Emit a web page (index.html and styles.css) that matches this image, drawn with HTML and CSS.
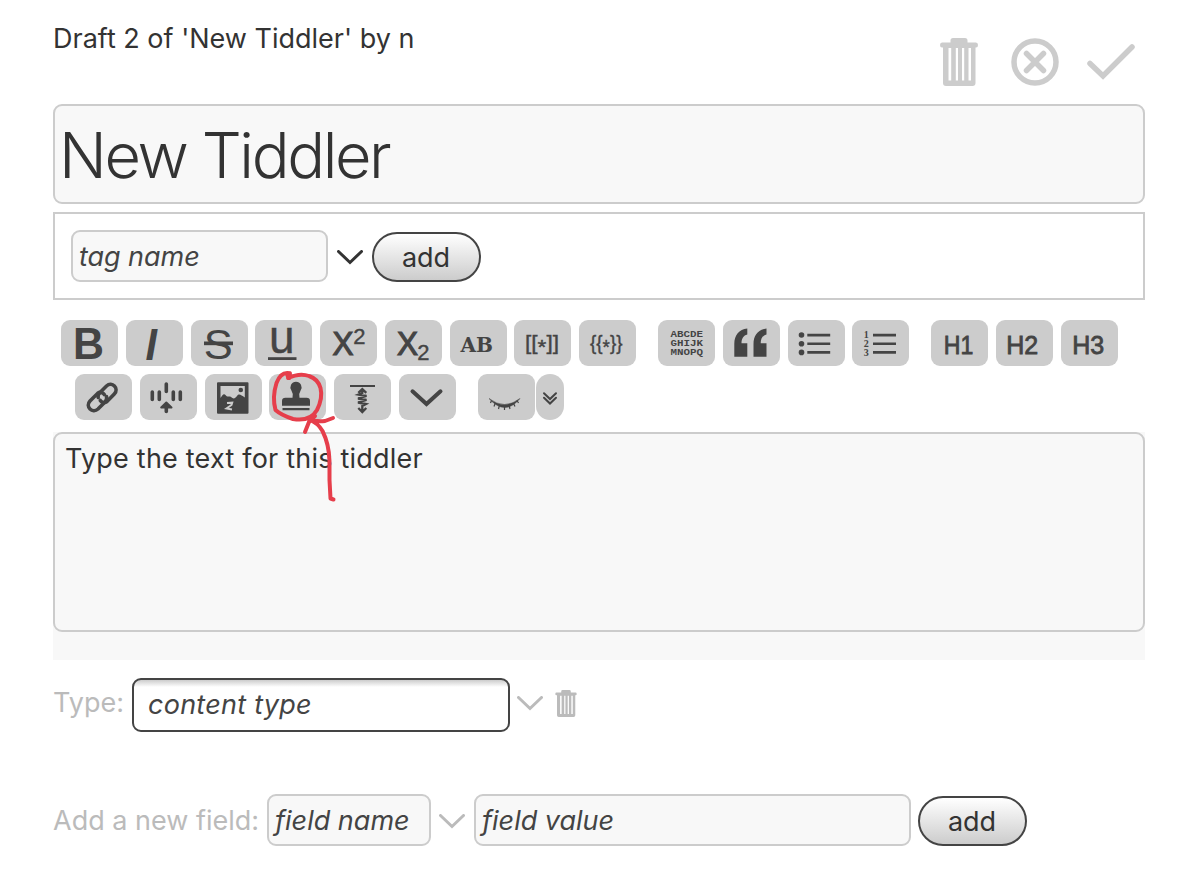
FILE: index.html
```html
<!DOCTYPE html>
<html lang="en">
<head>
<meta charset="utf-8">
<title>New Tiddler</title>
<link rel="stylesheet" href="styles.css">
</head>
<body>
<svg class="defs" width="0" height="0">
  <symbol id="trash" viewBox="0 0 38 48"><path fill-rule="evenodd" d="M2 4.500H10.500V2.500Q10.500 0 13 0H25Q27.500 0 27.500 2.500V4.500H36Q38 4.500 38 7T36 9.500H35.500V45Q35.500 48 32.500 48H6Q3 48 3 45V9.500H2Q0 9.500 0 7T2 4.500ZM8.500 10V42.500H11.200V10ZM15.800 10V42.500H18V10ZM22 10V42.500H24.200V10ZM28.500 10V42.500H31V10Z"/></symbol>
  <symbol id="down" viewBox="0 0 26 15"><path d="M1.500 1.500L13 12.500L24.500 1.500" fill="none" stroke="currentColor" stroke-width="3" stroke-linecap="round"/></symbol>
</svg>
<main class="tiddler">
  <header class="head">
    <div class="subtitle">Draft 2 of 'New Tiddler' by n</div>
    <div class="controls">
      <svg class="trash-large"><use href="#trash"/></svg>
      <svg width="48" height="48" viewBox="0 0 48 48" fill="none" stroke="currentColor" stroke-linecap="round"><circle cx="24" cy="24" r="21" stroke-width="5.500"/><path d="M15.500 15.500L32.500 32.500M32.500 15.500L15.500 32.500" stroke-width="5.500"/></svg>
      <svg width="48" height="48" viewBox="0 0 48 48" fill="none" stroke="currentColor" stroke-width="5.500" stroke-linecap="round"><path d="M3 25.500L16 38L45 9"/></svg>
    </div>
  </header>
  <div class="field title"><span>New Tiddler</span></div>
  <section class="tags">
    <div class="field tag-name"><span>tag name</span></div>
    <svg class="down dark"><use href="#down"/></svg>
    <button class="add"><span>add</span></button>
  </section>
  <nav class="toolbar">
    <div class="row">
      <div class="group">
        <button class="tool"><svg viewBox="0 0 57 46"><text x="12" y="39.300" font-size="44" font-weight="700" textLength="31" lengthAdjust="spacingAndGlyphs">B</text></svg></button>
        <button class="tool"><svg viewBox="0 0 57 46"><text x="19.500" y="39.500" font-size="45" font-weight="700" font-style="italic" textLength="11.500" lengthAdjust="spacingAndGlyphs">I</text></svg></button>
        <button class="tool"><svg viewBox="0 0 57 46"><text x="12.800" y="39" font-size="42.500" textLength="29" lengthAdjust="spacingAndGlyphs">S</text><path d="M13 21.500H42V25.200H13Z"/></svg></button>
        <button class="tool"><svg viewBox="0 0 57 46"><text class="medium" x="14" y="32.800" font-size="46">u</text><path d="M13 37.200H41.500V40H13Z"/></svg></button>
        <button class="tool"><svg viewBox="0 0 57 46"><text class="heavy" x="12.500" y="35.300" font-size="33.500" textLength="21" lengthAdjust="spacingAndGlyphs">X</text><text class="medium" x="33.300" y="24" font-size="22">2</text></svg></button>
        <button class="tool"><svg viewBox="0 0 57 46"><text class="heavy" x="12" y="35.300" font-size="33.500" textLength="21" lengthAdjust="spacingAndGlyphs">X</text><text class="medium" x="32.300" y="39.700" font-size="22">2</text></svg></button>
        <button class="tool"><svg viewBox="0 0 57 46"><text class="slab" x="10.500" y="31.500" font-size="20.500" textLength="32.500" lengthAdjust="spacingAndGlyphs">AB</text></svg></button>
        <button class="tool"><svg viewBox="0 0 57 46"><text class="medium" x="11" y="29.500" font-size="21" textLength="34" lengthAdjust="spacingAndGlyphs">[[<tspan dy="4">*</tspan><tspan dy="-4">]]</tspan></text></svg></button>
        <button class="tool"><svg viewBox="0 0 57 46"><text class="medium" x="11" y="29.500" font-size="21" textLength="32.500" lengthAdjust="spacingAndGlyphs">{{<tspan dy="4">*</tspan><tspan dy="-4">}}</tspan></text></svg></button>
      </div>
      <div class="group">
        <button class="tool"><svg viewBox="0 0 57 46"><g class="mono" font-size="9.500"><text x="12.500" y="17.300" textLength="32.500" lengthAdjust="spacingAndGlyphs">ABCDE</text><text x="12.500" y="26" textLength="32.500" lengthAdjust="spacingAndGlyphs">GHIJK</text><text x="12.500" y="34.700" textLength="32.500" lengthAdjust="spacingAndGlyphs">MNOPQ</text></g></svg></button>
        <button class="tool"><svg viewBox="0 0 57 46"><path id="quote" d="M24.300 8.500V14.500C20.500 15.500 18.500 18.500 18.500 23.300H24.300V36.700H11.300V24C11.300 15 16 9.500 24.300 8.500Z"/><use href="#quote" x="19.200"/></svg></button>
        <button class="tool"><svg viewBox="0 0 57 46"><circle cx="13.500" cy="15" r="2.800"/><circle cx="13.500" cy="23.700" r="2.800"/><circle cx="13.500" cy="32.400" r="2.800"/><path d="M19.300 13.700H42.200V16.400H19.300ZM19.300 22.400H42.200V25H19.300ZM19.300 31H42.200V33.700H19.300Z"/></svg></button>
        <button class="tool"><svg viewBox="0 0 57 46"><g class="serif" font-size="10"><text x="11.800" y="18.400">1</text><text x="11.800" y="27.200">2</text><text x="11.800" y="36">3</text></g><path d="M21 13.700H44V16.400H21ZM21 22.400H44V25H21ZM21 31H44V33.700H21Z"/></svg></button>
      </div>
      <div class="group">
        <button class="tool"><svg viewBox="0 0 57 46"><text class="heading" x="12.800" y="34" font-size="25" textLength="29.500" lengthAdjust="spacingAndGlyphs">H1</text></svg></button>
        <button class="tool"><svg viewBox="0 0 57 46"><text class="heading" x="10.300" y="34" font-size="25" textLength="32" lengthAdjust="spacingAndGlyphs">H2</text></svg></button>
        <button class="tool"><svg viewBox="0 0 57 46"><text class="heading" x="11.300" y="34" font-size="25" textLength="32" lengthAdjust="spacingAndGlyphs">H3</text></svg></button>
      </div>
    </div>
    <div class="row second">
      <div class="group">
        <button class="tool"><svg viewBox="0 0 57 46" fill="none" stroke="#444" stroke-width="3.600" stroke-linecap="round"><path d="M23.200 23.500C22.500 21.500 23.500 20 25 18.500L31.500 12C37 7 44.500 14.500 39.300 20L32 27.500C29.500 29.500 26.500 28.500 25.300 26.500"/><path d="M31.500 22.500C32.300 25 31.500 26.500 29.500 28.500L23 35C17.500 40 9.800 32.500 15 27L22.500 19.500C25 17.500 28 18.500 29.300 20.500"/></svg></button>
        <button class="tool"><svg viewBox="0 0 57 46" fill="none" stroke="#444" stroke-width="3.600" stroke-linecap="round"><path d="M12.300 18V25.500M19.300 18V25.500M26.300 10V17.500M33.300 18V25.500M40.300 18V25.500M26.300 31V37.500"/><path d="M26.300 28.500L31.500 33.500H21.200Z" fill="#444" stroke-width="2" stroke-linejoin="round"/></svg></button>
        <button class="tool"><svg viewBox="0 0 57 46"><path fill-rule="evenodd" d="M13 8.300H42.500Q43.500 8.300 43.500 9.300V38.700Q43.500 39.700 42.500 39.700H13Q12 39.700 12 38.700V9.300Q12 8.300 13 8.300ZM15.500 12V24C17 22 18.500 19 20.500 21C22.500 24 24 21.500 26 23C28 24.500 29.500 25.500 32 22C34 19 36 21 39.800 23.500V12Z"/><circle cx="35.800" cy="16" r="2.300"/><path d="M22 29L27.200 28.700L26.500 31L21.500 34.500L27 35.500" fill="none" stroke="#ccc" stroke-width="2"/></svg></button>
        <button class="tool"><svg viewBox="0 0 57 46"><path d="M27 7.800A5.600 5.600 0 0 1 31.500 16.700Q29.500 19.500 30.500 23.700H37.500Q41 23.700 41 27V31.700H13V27Q13 23.700 16.500 23.700H23.500Q24.500 19.500 22.500 16.700A5.600 5.600 0 0 1 27 7.800ZM13.500 34H40.500V36.200H13.500Z"/></svg></button>
        <button class="tool"><svg viewBox="0 0 57 46" fill="none" stroke="#444" stroke-width="2"><path d="M16 12H41"/><path d="M24.300 18.800L28.300 15L32.300 18.800M24.300 34L28.300 38L32.300 34M28.300 15V19L24.500 20.500L32.500 22L24 24.500L32.500 26L24 28.500L32 30L28.300 32V38" stroke-width="2.300"/></svg></button>
        <button class="tool"><svg viewBox="0 0 57 46" fill="none" stroke="#444" stroke-width="4" stroke-linecap="round"><path d="M13.500 17.300L27.500 30L41.500 17.300"/></svg></button>
      </div>
      <div class="group preview">
        <button class="tool"><svg viewBox="0 0 57 46"><path d="M11 24.500Q26.500 36.500 42 24.500Q27 42.500 11 24.500Z" stroke="#444" stroke-width=".5"/><path d="M13.500 26.500L12.500 29M17.300 29L16 32.500M21.500 31L20.500 35M26.500 31.500V36M31 31L32 35M35.500 29.500L37 32.500M39 26.500L40.500 29" fill="none" stroke="#444" stroke-width="1.200"/></svg></button>
        <button class="tool narrow"><svg viewBox="0 0 28 46" fill="none" stroke="#444" stroke-width="2" stroke-linecap="round"><path d="M8 19.200L14 25L20 19.200M8 23.700L14 29.500L20 23.700"/></svg></button>
      </div>
    </div>
  </nav>
  <section class="editor"><div class="field body"><span>Type the text for this tiddler</span></div></section>
  <section class="type-row">
    <span class="label type-label">Type:</span>
    <div class="field content-type"><span>content type</span></div>
    <svg class="down"><use href="#down"/></svg>
    <svg class="trash-small"><use href="#trash"/></svg>
  </section>
  <section class="field-row">
    <span class="label add-label">Add a new field:</span>
    <div class="field field-name"><span>field name</span></div>
    <svg class="down"><use href="#down"/></svg>
    <div class="field field-value"><span>field value</span></div>
    <button class="add"><span>add</span></button>
  </section>
</main>
<svg class="marker" viewBox="265 365 80 145"><path d="M289.500 378Q285 375 290 373.300Q281 371 276.500 383Q272 397 275.500 410Q281 415 293 419Q310 422 317 410Q323 398 320.500 388Q318 379 309 376Q300 372.500 288 378M333.500 499.500L330.500 498.500L329.500 480V461Q329 444 322.500 431Q318 423 309 419.500M305 432L309 422L315 416M308 419Q316 422 325 421L333 418"/></svg>
</body>
</html>
```
FILE: styles.css
```css
* { box-sizing: border-box; }
body { position: relative; margin: 0; width: 1195px; height: 896px; overflow: hidden; background: #fff; color: #333; font: 27px/32px Inter, "Liberation Sans", sans-serif; }
button { font: inherit; color: inherit; border: 0; padding: 0; }
svg { display: block; flex: none; overflow: visible; }
span { white-space: nowrap; }
.defs { position: absolute; }
.tiddler { width: 1092px; margin-left: 53px; }
.head { display: flex; justify-content: space-between; height: 104px; padding: 23px 10px 0 0; }
.subtitle { white-space: nowrap; }
.controls { display: flex; padding-top: 15px; color: #ccc; fill: #ccc; }
.controls svg + svg { margin-left: 28px; }
.controls .trash-large + svg { margin-left: 33px; }
.trash-large { width: 38px; height: 48px; }
.field { display: flex; align-items: center; padding-top: 2px; border: 2px solid #ccc; border-radius: 9px; background: #f8f8f8; font-style: italic; color: #444; }
.title { height: 100px; padding: 2px 0 0 4px; font-size: 63px; font-weight: 300; font-style: normal; color: #333; line-height: 80px; letter-spacing: -2.400px; }
.tags { display: flex; align-items: center; height: 88px; margin-top: 8px; padding-left: 16px; border: 2px solid #ccc; }
.tag-name { width: 257px; height: 52px; padding-left: 6px; letter-spacing: -.05px; }
.down { width: 26px; height: 15px; margin: 2px 9px 0; color: #bbb; }
.down.dark { color: #333; }
.add { width: 109px; height: 50px; margin-top: 2px; padding: 2px 1px 0 0; border: 2px solid #444; border-radius: 25px; background: linear-gradient(#fff, #ccc); }
.toolbar { display: flex; flex-direction: column; gap: 8px; padding: 20px 0 0 8px; height: 132px; }
.row { display: flex; gap: 22px; height: 46px; }
.second { padding-left: 14px; }
.group { display: flex; gap: 7.780px; }
.preview { gap: 1px; }
.tool { width: 57px; height: 46px; border-radius: 9px; background: #ccc; fill: #444; font-family: "Liberation Sans", sans-serif; }
.tool svg { width: 100%; height: 46px; }
.narrow { width: 28px; border-radius: 14px; }
.medium { stroke: #444; stroke-width: .4px; }
.heavy { stroke: #444; stroke-width: 1.200px; }
.heading { stroke: #444; stroke-width: .8px; }
.slab { font-family: "DejaVu Serif", serif; font-weight: 700; }
.mono { font-family: "Liberation Mono", monospace; font-weight: 700; }
.serif { font-family: "Liberation Serif", serif; font-weight: 700; }
.editor { height: 228px; background: #f8f8f8; }
.body { align-items: flex-start; height: 200px; padding: 9px 0 0 10px; font-style: normal; color: #333; letter-spacing: .21px; }
.label { color: #bbb; }
.type-row { display: flex; align-items: center; height: 54px; margin-top: 18px; }
.type-label { width: 79px; padding-bottom: 4px; }
.content-type { width: 378px; height: 54px; padding: 0 0 0 14px; border-color: #444; background: linear-gradient(#ccc, #fff 7px); letter-spacing: .25px; }
.type-row .down { margin: -4px 12px 0 7px; }
.trash-small { width: 22px; height: 27px; margin-top: -4px; fill: #bbb; }
.field-row { display: flex; align-items: center; height: 52px; margin-top: 62px; }
.add-label { width: 214px; padding-top: 2px; }
.field-name { width: 164px; height: 52px; padding-left: 6px; }
.field-row .down { margin: 2px 9px 0 8px; }
.field-value { width: 437px; height: 52px; padding-left: 6px; }
.field-row .add { margin-left: 7px; }
.marker { position: absolute; left: 265px; top: 365px; width: 80px; height: 145px; fill: none; stroke: #e63e4b; stroke-width: 4; stroke-linecap: round; stroke-linejoin: round; }
```
